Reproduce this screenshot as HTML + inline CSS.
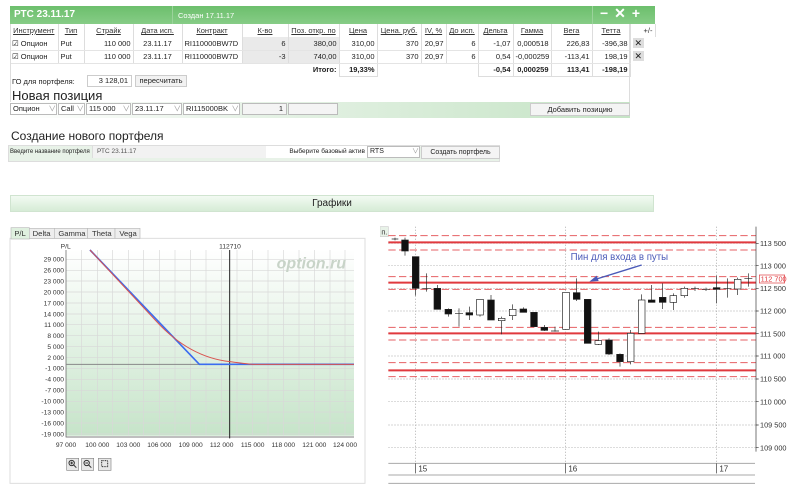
<!DOCTYPE html>
<html><head><meta charset="utf-8"><style>
*{margin:0;padding:0;box-sizing:border-box}
body{width:800px;height:485px;background:#fff;font-family:"Liberation Sans","Noto Sans CJK SC",sans-serif;position:relative;overflow:hidden;color:#222}
.a{position:absolute}
.hdr{left:10px;top:6px;width:645px;height:18px;background:linear-gradient(#6cbf6c,#86cc86);}
table{border-collapse:collapse;table-layout:fixed;font-size:7.5px}
td{height:13px;padding:0 2px;white-space:nowrap;overflow:hidden}
.th td{text-decoration:underline;text-align:center;color:#333;border-right:1px solid #ddd;background:#fff}
.r td{border-right:1px solid #ddd;border-bottom:1px solid #e4e4e4}
.rt{text-align:right}.c{text-align:center}
.g{background:#eaeaea}
.sel{border:1px solid #bbb;background:#fff;height:12px;font-size:7.5px;padding-left:2px;line-height:10px}
</style></head><body>
<div class="a hdr"></div>
<div class="a" style="left:172px;top:6px;width:1px;height:18px;background:#9bd39b"></div>
<div class="a" style="left:592px;top:6px;width:1px;height:18px;background:#9bd39b"></div>
<div class="a" style="left:14px;top:9px;font-size:10px;font-weight:bold;color:#fff">РТС 23.11.17</div>
<div class="a" style="left:178px;top:11px;font-size:7.5px;color:#fff">Создан 17.11.17</div>
<div class="a" style="left:600px;top:5px;font-size:14px;font-weight:bold;color:#fff;letter-spacing:6px">−✕+</div>
<table class="a" style="left:10px;top:24px;width:645px">
<colgroup><col style="width:48px"><col style="width:26px"><col style="width:49px"><col style="width:49px"><col style="width:60px"><col style="width:46px"><col style="width:51px"><col style="width:38px"><col style="width:44px"><col style="width:25px"><col style="width:32px"><col style="width:35px"><col style="width:38px"><col style="width:41px"><col style="width:38px"><col style="width:25px"></colgroup>
<tr class="th"><td>Инструмент</td><td>Тип</td><td>Страйк</td><td>Дата исп.</td><td>Контракт</td><td>К-во</td><td>Поз. откр. по</td><td>Цена</td><td>Цена. руб.</td><td>IV, %</td><td>До исп.</td><td>Дельта</td><td>Гамма</td><td>Вега</td><td>Тетта</td><td style="text-decoration:none;text-align:right">+/-</td></tr>
<tr class="r"><td>☑ Опцион</td><td>Put</td><td class="rt">110 000</td><td class="c">23.11.17</td><td>RI110000BW7D</td><td class="rt g">6</td><td class="rt g">380,00</td><td class="rt">310,00</td><td class="rt">370</td><td class="rt">20,97</td><td class="rt">6</td><td class="rt">-1,07</td><td class="rt">0,000518</td><td class="rt">226,83</td><td class="rt">-396,38</td><td style="border:none"><span style="background:#ddd;padding:0 2px;font-size:9px">✕</span></td></tr>
<tr class="r"><td>☑ Опцион</td><td>Put</td><td class="rt">110 000</td><td class="c">23.11.17</td><td>RI110000BW7D</td><td class="rt g">-3</td><td class="rt g">740,00</td><td class="rt">310,00</td><td class="rt">370</td><td class="rt">20,97</td><td class="rt">6</td><td class="rt">0,54</td><td class="rt">-0,000259</td><td class="rt">-113,41</td><td class="rt">198,19</td><td style="border:none"><span style="background:#ddd;padding:0 2px;font-size:9px">✕</span></td></tr>
<tr style="font-weight:bold"><td colspan="6"></td><td class="rt">Итого:</td><td class="rt" style="border:1px solid #ddd">19,33%</td><td colspan="3"></td><td class="rt" style="border:1px solid #ddd">-0,54</td><td class="rt" style="border:1px solid #ddd">0,000259</td><td class="rt" style="border:1px solid #ddd">113,41</td><td class="rt" style="border:1px solid #ddd">-198,19</td><td></td></tr>
</table>
<div class="a" style="left:629px;top:24px;width:1px;height:94px;background:#ddd"></div>
<div class="a" style="left:10px;top:24px;width:1px;height:94px;background:#ddd"></div>
<div class="a" style="left:12px;top:77px;font-size:7.5px">ГО для портфеля:</div>
<div class="a" style="left:87px;top:75px;width:45px;height:12px;border:1px solid #ccc;font-size:7.5px;text-align:right;padding-right:3px;line-height:10px">3 128,01</div>
<div class="a" style="left:135px;top:75px;width:52px;height:12px;border:1px solid #ccc;background:#f2f2f2;font-size:7.5px;text-align:center;line-height:10px">пересчитать</div>
<div class="a" style="left:12px;top:88px;font-size:13px">Новая позиция</div>
<div class="a" style="left:10px;top:102px;width:620px;height:16px;background:linear-gradient(90deg,#fff 0%,#e6f2e6 40%,#c5e4c5 100%)"></div>
<div class="a sel" style="left:10px;top:103px;width:47px">Опцион <span style="float:right;color:#999">∨</span></div>
<div class="a sel" style="left:58px;top:103px;width:27px">Call <span style="float:right;color:#999">∨</span></div>
<div class="a sel" style="left:86px;top:103px;width:45px">115 000 <span style="float:right;color:#999">∨</span></div>
<div class="a sel" style="left:132px;top:103px;width:50px">23.11.17 <span style="float:right;color:#999">∨</span></div>
<div class="a sel" style="left:183px;top:103px;width:57px">RI115000BK <span style="float:right;color:#999">∨</span></div>
<div class="a sel" style="left:242px;top:103px;width:45px;text-align:right;padding-right:3px;background:#f4f4f4">1</div>
<div class="a sel" style="left:288px;top:103px;width:50px;background:#f4f4f4"></div>
<div class="a" style="left:530px;top:103px;width:100px;height:13px;background:#f4f4f4;border:1px solid #ccc;font-size:7.5px;text-align:center;line-height:11px">Добавить позицию</div>
<div class="a" style="left:11px;top:129px;font-size:12px">Создание нового портфеля</div>
<div class="a" style="left:8px;top:145px;width:492px;height:17px;background:#e8f2e8;border:1px solid #ddd"></div>
<div class="a" style="left:10px;top:147px;font-size:6px;line-height:11px;white-space:nowrap">Введите название портфеля</div>
<div class="a" style="left:92px;top:146px;width:174px;height:12px;background:#f2f2f2;border-left:1px solid #ddd;font-size:6.5px;padding-left:4px;line-height:11px;color:#555">РТС 23.11.17</div>
<div class="a" style="left:266px;top:146px;width:101px;height:12px;background:#fff;font-size:6.5px;text-align:right;padding-right:2px;line-height:11px">Выберите базовый актив</div>
<div class="a sel" style="left:367px;top:146px;width:53px;font-size:7px">RTS <span style="float:right;color:#999">∨</span></div>
<div class="a" style="left:421px;top:146px;width:79px;height:13px;background:#f4f4f4;border:1px solid #ccc;font-size:7px;text-align:center;line-height:11px">Создать портфель</div>
<div class="a" style="left:10px;top:195px;width:644px;height:17px;background:linear-gradient(#f2faf2,#d6ecd6);border:1px solid #d0e4d0;font-size:10px;text-align:center;line-height:15px">Графики</div>

<svg class="a" style="left:0;top:225px" width="370" height="260" viewBox="0 0 1110 780">
<defs><linearGradient id="gg" x1="0" y1="0" x2="0" y2="1"><stop offset="0" stop-color="#fff"/><stop offset="1" stop-color="#c6e4c9"/></linearGradient></defs>
<rect x="30" y="40" width="1065" height="735" fill="#fff" stroke="#ddd" stroke-width="3"/>
<g font-size="23" font-family="Liberation Sans" fill="#333">
<rect x="33" y="8" width="55" height="34" fill="#dff0df" stroke="#bbb" stroke-width="2"/><text x="43" y="33">P/L</text>
<rect x="88" y="10" width="75" height="30" fill="#eee" stroke="#bbb" stroke-width="2"/><text x="98" y="33">Delta</text>
<rect x="163" y="10" width="100" height="30" fill="#eee" stroke="#bbb" stroke-width="2"/><text x="175" y="33">Gamma</text>
<rect x="263" y="10" width="82" height="30" fill="#eee" stroke="#bbb" stroke-width="2"/><text x="276" y="33">Theta</text>
<rect x="345" y="10" width="75" height="30" fill="#eee" stroke="#bbb" stroke-width="2"/><text x="358" y="33">Vega</text>
</g>
<rect x="198" y="75" width="864" height="557" fill="url(#gg)"/>
<g stroke="#d8d8d8" stroke-width="2">
<path d="M245 75V632M338 75V632M431 75V632M525 75V632M618 75V632M711 75V632M804 75V632M897 75V632M990 75V632"/>
<path d="M292 75V632M385 75V632M478 75V632M572 75V632M665 75V632M758 75V632M850 75V632M943 75V632M1035 75V632"/>
<path d="M198 103H1062M198 136H1062M198 168H1062M198 201H1062M198 234H1062M198 267H1062M198 299H1062M198 332H1062M198 365H1062M198 398H1062M198 430H1062M198 463H1062M198 496H1062M198 529H1062M198 561H1062M198 594H1062M198 627H1062"/>
</g>
<path d="M198 75V636H1062" stroke="#555" stroke-width="2" fill="none"/>
<path d="M198 418H1062" stroke="#888" stroke-width="3"/>
<path d="M689 75V640" stroke="#222" stroke-width="3"/>
<path d="M270 75L598 418H1062" stroke="#3b6cf0" stroke-width="5" fill="none"/>
<path d="M270 75L470 290C530 355 600 400 690 410C720 414 740 417 760 418H1062" stroke="#d9534f" stroke-width="3" fill="none"/>
<text x="830" y="130" font-size="48" font-style="italic" font-weight="bold" fill="#c8d4c8" font-family="Liberation Sans">option.ru</text>
<g font-size="20" fill="#333" font-family="Liberation Sans" text-anchor="end">
<text x="192" y="110">29 000</text><text x="192" y="143">26 000</text><text x="192" y="175">23 000</text><text x="192" y="208">20 000</text><text x="192" y="241">17 000</text><text x="192" y="274">14 000</text><text x="192" y="306">11 000</text><text x="192" y="339">8 000</text><text x="192" y="372">5 000</text><text x="192" y="405">2 000</text><text x="192" y="437">-1 000</text><text x="192" y="470">-4 000</text><text x="192" y="503">-7 000</text><text x="192" y="536">-10 000</text><text x="192" y="568">-13 000</text><text x="192" y="601">-16 000</text><text x="192" y="634">-19 000</text>
</g>
<g font-size="20" fill="#333" font-family="Liberation Sans" text-anchor="middle">
<text x="198" y="666">97 000</text><text x="292" y="666">100 000</text><text x="385" y="666">103 000</text><text x="478" y="666">106 000</text><text x="572" y="666">109 000</text><text x="665" y="666">112 000</text><text x="758" y="666">115 000</text><text x="850" y="666">118 000</text><text x="943" y="666">121 000</text><text x="1035" y="666">124 000</text>
<text x="197" y="70">P/L</text><text x="690" y="70">112710</text>
</g>
<g stroke="#888" stroke-width="2" fill="#e8e8e8"><rect x="200" y="700" width="36" height="36"/><rect x="245" y="700" width="36" height="36"/><rect x="295" y="700" width="38" height="36"/></g>
<g stroke="#333" stroke-width="3" fill="none"><circle cx="215" cy="714" r="8"/><path d="M221 720l8 8M211 714h8M215 710v8"/><circle cx="260" cy="714" r="8"/><path d="M266 720l8 8M256 714h8"/><rect x="305" y="707" width="18" height="18" stroke-dasharray="3 2"/></g>
</svg>

<svg class="a" style="left:380px;top:225px" width="420" height="260" viewBox="0 0 1260 780">
<rect x="0" y="5" width="25" height="30" fill="#e8f2e8" stroke="#ccc" stroke-width="2"/><text x="4" y="28" font-size="22" font-family="Liberation Sans" fill="#333">п.</text>
<g stroke="#aaa" stroke-width="2" stroke-dasharray="4 5">
<path d="M25 55H1128M25 122H1128M25 190H1128M25 258H1128M25 326H1128M25 393H1128M25 462H1128M25 530H1128M25 600H1128M25 668H1128"/>
<path d="M107 5V715M557 5V715M1010 5V715"/>
</g>
<g stroke="#e0393e" stroke-width="3" stroke-dasharray="22 10" opacity="0.8">
<path d="M25 32H1128M25 75H1128M25 155H1128M25 193H1128M25 307H1128M25 345H1128M25 413H1128M25 455H1128"/>
</g>
<g stroke="#e0393e" stroke-width="6"><path d="M25 52H1128M25 173H1128M25 325H1128M25 436H1128"/></g>
<path d="M1128 5V680" stroke="#333" stroke-width="2"/>
<g stroke="#333" stroke-width="2"><path d="M1128 55h8M1128 122h8M1128 190h8M1128 258h8M1128 326h8M1128 393h8M1128 462h8M1128 530h8M1128 600h8M1128 668h8"/></g>
<g font-size="22" fill="#333" font-family="Liberation Sans"><text x="1140" y="63">113 500</text><text x="1140" y="130">113 000</text><text x="1140" y="198">112 500</text><text x="1140" y="266">112 000</text><text x="1140" y="334">111 500</text><text x="1140" y="401">111 000</text><text x="1140" y="470">110 500</text><text x="1140" y="538">110 000</text><text x="1140" y="608">109 500</text><text x="1140" y="676">109 000</text></g>
<rect x="1138" y="150" width="76" height="24" fill="#fff" stroke="#e0393e" stroke-width="2"/><text x="1142" y="169" font-size="22" fill="#e0393e" font-family="Liberation Sans">112 700</text>
<g stroke="#222" stroke-width="2">
<path d="M35 42h20M45 38v8"/>
<path d="M75 38V92M107 95V212M140 145V200M172 180V253M205 250V275M237 250V305M268 245V285M300 223V275M333 210V285M365 275V328M398 238V285M430 247V262M462 262V305M493 300V318M525 305V320M558 202V313M590 160V228M623 223V355M655 320V360M687 340V390M720 385V425M752 315V418M785 208V325M815 180V232M848 175V252M880 205V255M913 185V218M945 185V198M978 188V198M1010 152V235M1042 160V218M1073 158V210M1105 145V185"/>
<path d="M127 190h26M225 265h24M513 318h24M933 190h24M966 193h24M1030 190h24M1093 160h24"/>
</g>
<g stroke="#222" stroke-width="2" fill="#111">
<rect x="65" y="45" width="20" height="33"/><rect x="97" y="95" width="20" height="95"/><rect x="162" y="190" width="20" height="63"/><rect x="195" y="253" width="20" height="14"/><rect x="258" y="263" width="20" height="7"/><rect x="323" y="225" width="20" height="60"/><rect x="420" y="252" width="20" height="10"/><rect x="452" y="262" width="20" height="43"/><rect x="483" y="307" width="20" height="9"/><rect x="580" y="203" width="20" height="20"/><rect x="613" y="223" width="20" height="132"/><rect x="677" y="345" width="20" height="42"/><rect x="710" y="388" width="20" height="22"/><rect x="805" y="225" width="20" height="7"/><rect x="838" y="217" width="20" height="15"/><rect x="1000" y="188" width="20" height="5"/>
</g>
<g stroke="#222" stroke-width="2" fill="#fff">
<rect x="290" y="223" width="20" height="47"/><rect x="355" y="280" width="20" height="7"/><rect x="388" y="253" width="20" height="19"/><rect x="548" y="202" width="20" height="111"/><rect x="645" y="347" width="20" height="11"/><rect x="742" y="325" width="20" height="85"/><rect x="775" y="225" width="20" height="100"/><rect x="870" y="212" width="20" height="20"/><rect x="903" y="190" width="20" height="22"/><rect x="1063" y="163" width="20" height="29"/>
</g>
<text x="572" y="105" font-size="29" fill="#4a5ab8" font-family="Liberation Sans">Пин для входа в путы</text>
<path d="M785 120L640 165" stroke="#4a5ab8" stroke-width="4"/><path d="M628 170l22-18 6 16z" fill="#4a5ab8"/>
<path d="M25 715H1125M25 750H1125M25 775H1125" stroke="#aaa" stroke-width="3"/>
<path d="M107 715V745M557 715V745M1010 715V745" stroke="#333" stroke-width="2"/>
<g font-size="24" fill="#333" font-family="Liberation Sans"><text x="115" y="740">15</text><text x="565" y="740">16</text><text x="1018" y="740">17</text></g>
</svg>
</body></html>
